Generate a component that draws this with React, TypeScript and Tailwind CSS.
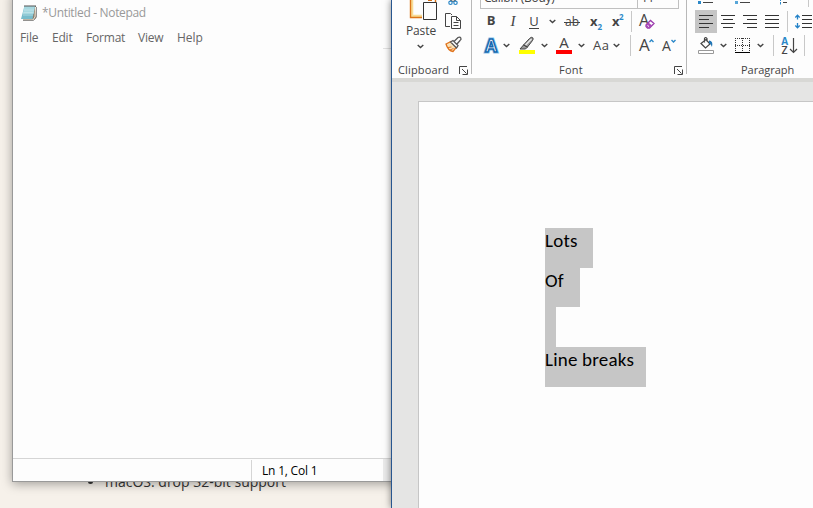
import type { ReactNode } from "react";

function Icon({ w, h, className = "", children }: { w: number; h: number; className?: string; children: ReactNode }) {
  return (
    <svg width={w} height={h} viewBox={`0 0 ${w} ${h}`} fill="none" className={`block shrink-0 overflow-visible ${className}`}>
      {children}
    </svg>
  );
}

function Chevron({ className = "" }: { className?: string }) {
  return (
    <Icon w={7} h={5} className={className}>
      <path d="M.7 1 3.5 3.6 6.3 1" stroke="#444" strokeWidth="1.4" />
    </Icon>
  );
}

function Launcher() {
  return (
    <Icon w={9} h={9}>
      <path d="M.5 8V.5H8M3 3l4.5 4.5M8.5 3.5v5h-5" stroke="#444" />
    </Icon>
  );
}

function Divider({ className = "" }: { className?: string }) {
  return <div className={`h-[21px] w-px shrink-0 bg-[#c8c8c8] ${className}`} />;
}

function GroupSeparator() {
  return <div className="h-[74px] w-px shrink-0 bg-[#b8b8b8]" />;
}

function AlignIcon({ lines }: { lines: [number, number][] }) {
  return (
    <Icon w={14} h={13}>
      {lines.map(([a, b], i) => (
        <path key={i} d={`M${a} ${i * 4 + 0.5}H${b}`} stroke="#333" />
      ))}
    </Icon>
  );
}

function NotepadIcon() {
  return (
    <Icon w={16} h={17}>
      <path d="M4 1h11v12l-2 2H2z" fill="#8b7d6b" />
      <path d="M3.5 1H14l-2.5 13H0z" fill="#77bccb" />
      <path d="M3.500 1H14l-1.500 8H1.700z" fill="#a6d8e0" />
      <path d="M3 5h10M2.500 7.500h10M2 10h10" stroke="#c5e5ea" strokeWidth=".7" />
      <path d="M4 0v2M6 0v2M8 0v2M10 0v2M12 0v2M14 0v2" stroke="#555" />
      <path d="M14.500 2l-.5 10-2 3H2" stroke="#f5ecdc" />
      <path d="M15.500 2v10l-3 3.500H2" stroke="#777" strokeWidth=".8" />
    </Icon>
  );
}

function Notepad() {
  return (
    <section className="absolute -top-2 left-3 flex h-[490px] w-[420px] flex-col border border-[#999] bg-[#fdfdfd] pt-[7px] shadow-[0_2px_10px_rgba(0,0,0,0.35)]">
      <header className="flex h-[26px] items-center pl-2">
        <NotepadIcon />
        <span className="ml-[5px] w-[104px] text-[12px] tracking-[-0.33px] whitespace-nowrap text-[#999]">*Untitled - Notepad</span>
      </header>
      <nav className="mt-px flex h-[22px] items-center pl-[7px] text-[12px] text-[#666]">
        <span className="w-8 tracking-[-0.15px]">File</span>
        <span className="w-[34px] tracking-[-0.2px]">Edit</span>
        <span className="w-[52px] tracking-[-0.2px]">Format</span>
        <span className="w-[39px] tracking-[-0.2px]">View</span>
        <span>Help</span>
      </nav>
      <div className="-mt-px flex-1">
        <div className="ml-[370px] h-px w-2 bg-[#e2e2e2]" />
      </div>
      <footer className="flex h-[23px] border-t border-[#d5d5d5] text-[12px] text-black">
        <div className="w-[238px]" />
        <div className="mt-px flex w-[132px] items-center border-l border-[#d5d5d5] pl-[10px] tracking-[-0.2px]">Ln 1, Col 1</div>
        <div className="flex-1 bg-[#eaeaea]" />
      </footer>
    </section>
  );
}

function ClipboardGroup() {
  return (
    <div className="flex h-[78px] w-[79px] flex-col">
      <div className="flex h-[62px]">
        <div className="flex w-[53px] flex-col items-center pl-1">
          <Icon w={28} h={20} className="ml-1">
            <path d="M3 0v16h10" stroke="#f8dc95" strokeWidth="2.500" />
            <path d="M1.500 0v17.500H13M26.500 0v2" stroke="#dc7518" strokeWidth="1.400" />
            <path d="M19 0h4" stroke="#d66b0d" strokeWidth="2" />
            <path d="M14.500 2.500h13v17h-13z" fill="#fdfdfd" stroke="#333" />
          </Icon>
          <span className="mt-[2px] ml-px h-[18px] text-[12px] leading-[18px] tracking-[-0.1px]">Paste</span>
          <Chevron className="mt-1" />
        </div>
        <div className="flex flex-col">
          <Icon w={16} h={6}>
            <path d="m5 0 3 1.500L11 0" stroke="#444" />
            <circle cx="5.500" cy="2.800" r="1.700" stroke="#2b88c8" strokeWidth="1.200" />
            <circle cx="10.500" cy="2.800" r="1.700" stroke="#2b88c8" strokeWidth="1.200" />
          </Icon>
          <Icon w={16} h={16} className="mt-[7px]">
            <path d="M5 13.500H.5V.5h5l1.500 1.500M6.500 3.500h5l4 4v8h-9zM11.500 3.500v4h4M8.500 9.500h5M8.500 12.500h5" stroke="#444" />
          </Icon>
          <Icon w={17} h={16} className="mt-2">
            <path d="m1 7 5-2.500 5.500 5.500-3.500 4.500C4.500 14 2.500 12 1 7Z" fill="#f8e3ba" stroke="#e0721b" strokeWidth="1.300" />
            <path d="m3 10.500 3.500-.5M5 13l3.500-1.500" stroke="#df7421" />
            <path d="m5.500 5 2.500-1.500 5 5-1.500 2.500zM9 4.500l4-4Q15-.5 15.800 1T15 3.500L12 7" fill="#fdfdfd" stroke="#555" strokeWidth="1.300" />
          </Icon>
        </div>
      </div>
      <div className="flex h-4 items-center justify-between pr-[3px] pl-[6px]">
        <span className="tracking-[0.15px]">Clipboard</span>
        <Launcher />
      </div>
    </div>
  );
}

function FontGroup() {
  return (
    <div className="flex h-[78px] w-[214px] flex-col">
      <div className="ml-2 flex h-[9px] w-[199px] items-end overflow-hidden border-b border-l border-[#c0c0c0] text-[12px]">
        <span className="h-[16px] w-[157px] border-r border-[#c0c0c0] pl-[3px] leading-[12px] tracking-[-0.25px]">Calibri (Body)</span>
        <span className="h-[16px] flex-1 border-r border-[#c0c0c0] pl-[3px] leading-[12px] tracking-[-0.25px]">11</span>
      </div>
      <div className="mt-[2px] flex h-[21px] items-center pl-2">
        <span className="-mt-px w-[22px] text-center text-[13px] font-bold">B</span>
        <span className="-mt-px w-[22px] text-center font-['Liberation_Serif',serif] text-[15px] italic">I</span>
        <Icon w={20} h={16}>
          <text x="10" y="12" textAnchor="middle" fontSize="13" fill="#444">U</text>
          <path d="M5 14.500h10" stroke="#444" />
        </Icon>
        <Chevron className="ml-[5px]" />
        <Icon w={16} h={16} className="ml-[8px]">
          <text x="8" y="12" textAnchor="middle" fontSize="12" fill="#444">ab</text>
          <path d="M0 8.500h16" stroke="#444" />
        </Icon>
        <Icon w={14} h={16} className="ml-[10px]">
          <text x="0" y="12" fontSize="13" fontWeight="700" fill="#444">x</text>
          <text x="7.500" y="15.500" fontSize="8" fontWeight="700" fill="#2b88c8">2</text>
        </Icon>
        <Icon w={14} h={16} className="ml-[8px]">
          <text x="0" y="12" fontSize="13" fontWeight="700" fill="#444">x</text>
          <text x="7" y="6" fontSize="8" fontWeight="700" fill="#2b88c8">2</text>
        </Icon>
        <Divider className="ml-[5px]" />
        <Icon w={17} h={17} className="ml-[7px]">
          <text x="0" y="12.500" fontSize="16" fill="#444">A</text>
          <path d="m7 12 4.500-4.500 3.500 3-4.500 4.500H8.500L7 13.500z" fill="#fdfdfd" stroke="#9b3bad" strokeWidth="1.300" />
          <path d="m9.500 9.500 3.500 3-2.500 2.500h-2L7 13.500V12z" fill="#a84ab8" />
          <path d="m8.500 12.500 1.500 1" stroke="#fff" />
        </Icon>
      </div>
      <div className="mt-[3px] flex h-[21px] items-center pl-3">
        <Icon w={14} h={16}>
          <text x="7" y="13.500" textAnchor="middle" fontSize="17" fontWeight="700" fill="#fff" stroke="#8cc4ec" strokeWidth="3">A</text>
          <text x="7" y="13.500" textAnchor="middle" fontSize="17" fontWeight="700" fill="#fff" stroke="#1769af" strokeWidth="1.500">A</text>
        </Icon>
        <Chevron className="ml-[5px]" />
        <Icon w={17} h={17} className="ml-[9px]">
          <path d="M0 13h16v4H0z" fill="#ff0" />
          <path d="m4.500 8 6-6.500q2-2 3.300-.7 1 1-.5 3L8.500 10zM4.500 8l4 2-2 2H1z" fill="#999" stroke="#444" />
          <path d="m6.500 8 6-6" stroke="#eee" strokeWidth="1.200" />
        </Icon>
        <Chevron className="ml-[5px]" />
        <Icon w={16} h={17} className="ml-[8px]">
          <text x="8" y="11" textAnchor="middle" fontSize="15" fill="#444">A</text>
          <path d="M0 13h16v4H0z" fill="red" />
        </Icon>
        <Chevron className="ml-[6px]" />
        <span className="ml-[8px] w-4 text-[13px] tracking-[0.5px] whitespace-nowrap">Aa</span>
        <Chevron className="ml-[4px]" />
        <Divider className="ml-[10px]" />
        <Icon w={15} h={16} className="ml-[8px]">
          <text x="0" y="12.500" fontSize="17" fill="#444">A</text>
          <path d="m10.500 4 2-2 2 2" stroke="#2b88c8" strokeWidth="1.400" />
        </Icon>
        <Icon w={14} h={16} className="ml-[8px]">
          <text x="0" y="12.500" fontSize="14" fill="#444">A</text>
          <path d="m9.500 2 2 2 2-2" stroke="#2b88c8" strokeWidth="1.400" />
        </Icon>
      </div>
      <div className="mt-[6px] flex h-4 items-center pr-[3px] pl-[87px]">
        <span className="flex-1 tracking-[0.2px]">Font</span>
        <Launcher />
      </div>
    </div>
  );
}

function ParagraphGroup() {
  return (
    <div className="flex h-[78px] w-[126px] flex-col">
      <div className="flex h-[10px] pl-[11px]">
        <Icon w={16} h={5}>
          <path d="M0 1h3v3H0z" fill="#2b88c8" />
          <path d="M5 2.500h10" stroke="#444" />
        </Icon>
        <Icon w={16} h={5} className="ml-[21px]">
          <path d="M0 1h3v3H0z" fill="#58a6d8" />
          <path d="M5 2.500h10" stroke="#444" />
        </Icon>
        <Icon w={8} h={5} className="ml-[29px]">
          <path d="M.5 0v1M.5 2v2.500" stroke="#2b88c8" />
          <path d="M3 2.500h4" stroke="#444" />
        </Icon>
        <div className="ml-[20px] h-[7px] w-px bg-[#c8c8c8]" />
      </div>
      <div className="flex h-[23px] items-center pl-2">
        <div className="flex h-[23px] w-[22px] items-center justify-center bg-[#c5c5c5]">
          <AlignIcon lines={[[0, 14], [0, 10], [0, 14], [0, 10]]} />
        </div>
        <div className="ml-[4px]"><AlignIcon lines={[[0, 14], [2, 12], [0, 14], [2, 12]]} /></div>
        <div className="ml-[8px]"><AlignIcon lines={[[0, 14], [4, 14], [0, 14], [4, 14]]} /></div>
        <div className="ml-[8px]"><AlignIcon lines={[[0, 14], [0, 14], [0, 14], [0, 14]]} /></div>
        <Divider className="ml-[8px]" />
        <Icon w={17} h={15} className="ml-[7px]">
          <path d="M2.500 1v4.500M2.500 9v5M.3 3.500l2.200-2.300 2.200 2.300M.3 11.500l2.200 2.300 2.200-2.300" stroke="#2382c8" strokeWidth="1.300" />
          <path d="M7 1.500h10M7 5.500h10M7 9.500h10M7 13.500h10" stroke="#333" />
        </Icon>
      </div>
      <div className="mt-[2px] flex h-[21px] items-center pl-[11px]">
        <Icon w={16} h={17}>
          <path d="m3 6.500 5-4 4 4.500-4.500 4zM6.500 5.500V1.500q1-2 2.500 0v3" stroke="#444" strokeWidth="1.200" />
          <path d="M11 3.500q4.500 0 3 6.500-1-3-3-4z" fill="#2176b6" />
          <path d="M.5 13.500h15v3H.5z" fill="#fff" stroke="#999" />
        </Icon>
        <Chevron className="ml-[6px]" />
        <Icon w={15} h={16} className="ml-[8px]">
          <path d="M0 .5h15M0 7.500h15" stroke="#333" strokeDasharray="1 1" />
          <path d="M.5 0v14M7.500 0v14M14.500 0v14" stroke="#333" strokeDasharray="1 1" />
          <path d="M0 14.500h15" stroke="#000" />
        </Icon>
        <Chevron className="ml-[7px]" />
        <Divider className="ml-[9px]" />
        <Icon w={16} h={17} className="ml-[7px]">
          <text x=".2" y="7.500" fontSize="10" fontWeight="700" fill="#2b88c8">A</text>
          <text x=".5" y="16.500" fontSize="10.500" fontWeight="600" fill="#444">Z</text>
          <path d="M12.500 1v14.500M9 12l3.500 3.500L16 12" stroke="#444" strokeWidth="1.200" />
        </Icon>
        <Divider className="ml-[7px]" />
      </div>
      <div className="mt-[6px] flex h-4 items-center pl-[54px] tracking-[-0.02px]">Paragraph</div>
    </div>
  );
}

function Word() {
  return (
    <section className="absolute inset-y-0 left-[391px] flex w-[422px] flex-col border-l border-[#28568f] bg-[#e5e5e4] shadow-[0_0_7px_rgba(0,0,0,0.5)]">
      <header className="flex h-[78px] shrink-0 bg-[#fdfdfd] text-[11px] text-[#444]">
        <ClipboardGroup />
        <GroupSeparator />
        <FontGroup />
        <GroupSeparator />
        <ParagraphGroup />
      </header>
      <div className="h-1 shrink-0 bg-[#d8d8d5]" />
      <main className="mt-[19px] ml-[26px] flex flex-1 flex-col items-start border-t border-l border-[#c6c6c6] bg-[#fdfdfd] pt-[126px] pl-[126px] font-[Carlito,Lato,sans-serif] text-[19px] leading-[26px] tracking-[0.2px] whitespace-nowrap text-black">
        <p className="h-10 w-12 bg-[#c6c6c6]">Lots</p>
        <p className="h-[39px] w-[35px] bg-[#c6c6c6]">Of</p>
        <p className="h-10 w-[11px] bg-[#c6c6c6]" />
        <p className="h-10 w-[101px] bg-[#c6c6c6]">Line breaks</p>
      </main>
    </section>
  );
}

export default function App() {
  return (
    <div className="relative h-[508px] w-[813px] overflow-hidden bg-[#f6f1ea] font-['Open_Sans','Noto_Sans',sans-serif]">
      <ul className="list-disc pt-[471px] pl-[105px] text-[14px] leading-[22px] text-[#333]">
        <li>macOS: drop 32-bit support</li>
      </ul>
      <Notepad />
      <Word />
    </div>
  );
}
